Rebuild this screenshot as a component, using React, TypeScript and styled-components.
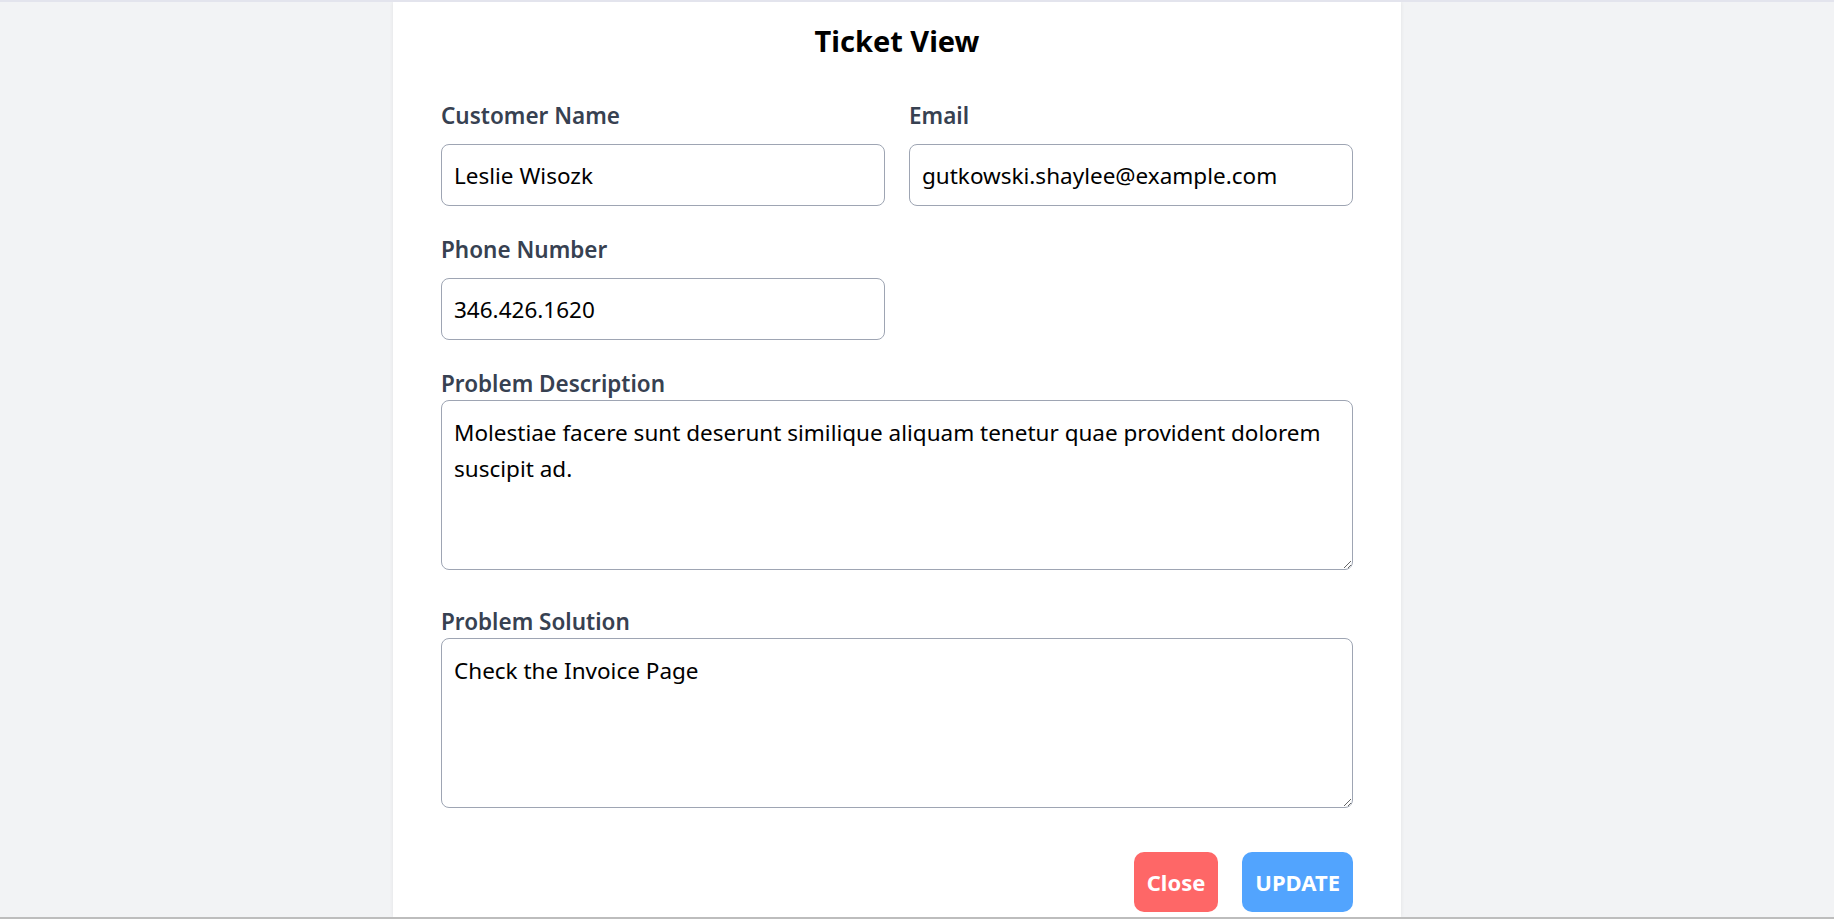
import styled, { createGlobalStyle } from "styled-components";

const GlobalStyle = createGlobalStyle`
  html, body {
    margin: 0;
    padding: 0;
    height: 100%;
  }
  body {
    font-family: "Noto Sans", "Open Sans", Arial, sans-serif;
    background: #f2f3f5;
    overflow: hidden;
  }
  * {
    box-sizing: border-box;
  }
`;

const ticket = {
  name: "Leslie Wisozk",
  email: "gutkowski.shaylee@example.com",
  phone: "346.426.1620",
  description:
    "Molestiae facere sunt deserunt similique aliquam tenetur quae provident dolorem suscipit ad.",
  solution: "Check the Invoice Page",
};

const TicketView = () => {
  return (
    <Page>
      <GlobalStyle />
      <TopStrip />
      <Main>
        <Panel>
          <Title>Ticket View</Title>

          <Row $top={41}>
            <Field>
              <Label htmlFor="name">Customer Name</Label>
              <Input id="name" type="text" defaultValue={ticket.name} />
            </Field>
            <Field>
              <Label htmlFor="email">Email</Label>
              <Input id="email" type="email" defaultValue={ticket.email} />
            </Field>
          </Row>

          <Row $top={28}>
            <Field>
              <Label htmlFor="phone">Phone Number</Label>
              <Input id="phone" type="text" defaultValue={ticket.phone} />
            </Field>
          </Row>

          <AreaField $top={28}>
            <Label htmlFor="description">Problem Description</Label>
            <TextArea id="description" defaultValue={ticket.description} />
          </AreaField>

          <AreaField $top={36}>
            <Label htmlFor="solution">Problem Solution</Label>
            <TextArea id="solution" defaultValue={ticket.solution} />
          </AreaField>

          <Actions>
            <Button $variant="close" type="button">
              Close
            </Button>
            <Button $variant="update" type="submit">
              UPDATE
            </Button>
          </Actions>
        </Panel>
      </Main>
      <BottomBar />
    </Page>
  );
};

export default TicketView;

const Page = styled.div`
  height: 100vh;
  display: flex;
  flex-direction: column;
  overflow: hidden;
`;

const TopStrip = styled.div`
  height: 2px;
  flex-shrink: 0;
  background: #e3e4ed;
`;

const BottomBar = styled.div`
  height: 2px;
  flex-shrink: 0;
  background: #bdbdbd;
`;

const Main = styled.div`
  flex: 1;
  display: flex;
  padding-left: 393px;
  overflow: hidden;
`;

const Panel = styled.div`
  width: 1008px;
  background: #ffffff;
  padding: 21px 48px 0;
  box-shadow: 0 0 4px rgba(0, 0, 0, 0.07);
`;

const Title = styled.h2`
  margin: 0;
  text-align: center;
  font-size: 29px;
  line-height: 36px;
  font-weight: 700;
  color: #000;
`;

const Row = styled.div<{ $top: number }>`
  display: grid;
  grid-template-columns: 1fr 1fr;
  gap: 24px;
  margin-top: ${(p) => p.$top}px;
`;

const Field = styled.div`
  display: flex;
  flex-direction: column;
  gap: 12px;
`;

const AreaField = styled.div<{ $top: number; $gap?: number }>`
  display: flex;
  flex-direction: column;
  gap: ${(p) => p.$gap ?? 0}px;
  margin-top: ${(p) => p.$top}px;
`;

const Label = styled.label`
  display: block;
  font-size: 22.5px;
  line-height: 32px;
  font-weight: 600;
  color: #374151;
`;

const Input = styled.input`
  height: 62px;
  width: 100%;
  padding: 0 12px;
  border: 1px solid #9ea5b3;
  border-radius: 8px;
  font-family: inherit;
  font-size: 22.5px;
  color: #000;
  background: #fff;
  outline: none;
`;

const TextArea = styled.textarea`
  display: block;
  height: 170px;
  width: 100%;
  padding: 14px 12px 12px;
  border: 1px solid #9ea5b3;
  border-radius: 8px;
  font-family: inherit;
  font-size: 22.5px;
  line-height: 36px;
  color: #000;
  background: #fff;
  outline: none;
`;

const Actions = styled.div`
  display: flex;
  justify-content: flex-end;
  gap: 24px;
  margin-top: 44px;
`;

const Button = styled.button<{ $variant: "close" | "update" }>`
  height: 60px;
  padding: 0 13px;
  border: none;
  border-radius: 10px;
  font-family: inherit;
  font-size: 22px;
  font-weight: 700;
  color: #fff;
  cursor: pointer;
  background: ${(p) => (p.$variant === "close" ? "#fe6767" : "#52a4fe")};
`;
